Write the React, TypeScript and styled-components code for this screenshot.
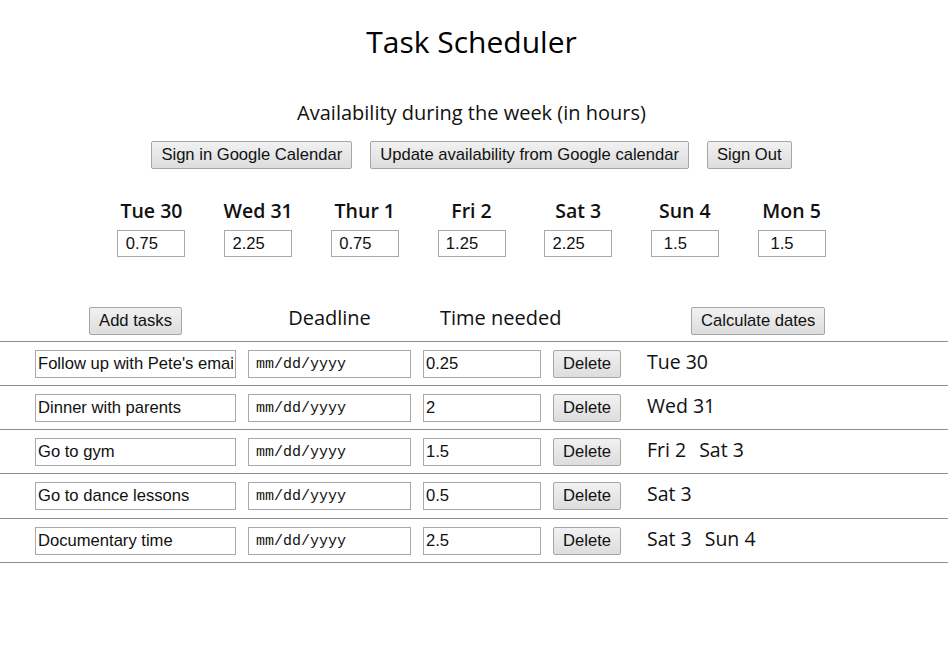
import React from "react";
import styled, { createGlobalStyle } from "styled-components";

const GlobalStyle = createGlobalStyle`
  html, body {
    margin: 0;
    padding: 0;
    background: #ffffff;
  }
  body {
    font-family: "Open Sans", "Noto Sans", sans-serif;
    color: #111111;
  }
`;

const Page = styled.div`
  width: 948px;
  padding-top: 22px;
`;

const Centered = styled.div`
  width: 943px;
`;

const Title = styled.h1`
  margin: 0;
  text-align: center;
  font-size: 30px;
  line-height: 40px;
  font-weight: 500;
  color: #000000;
`;

const Subtitle = styled.h3`
  margin: 38px 0 0;
  text-align: center;
  font-size: 20px;
  line-height: 26px;
  font-weight: 400;
`;

const ButtonRow = styled.div`
  display: flex;
  justify-content: center;
  gap: 18px;
  margin-top: 15px;
`;

const Button = styled.button`
  height: 28px;
  padding: 0 9px;
  font-family: "Liberation Sans", Arial, sans-serif;
  font-size: 16.6px;
  color: #111111;
  background: linear-gradient(#f1f1f1, #dddddd);
  border: 1px solid #a6a6a6;
  border-radius: 2px;
  cursor: pointer;
`;

const Week = styled.div`
  display: flex;
  justify-content: center;
  margin-top: 29px;
`;

const DayColumn = styled.div`
  width: 106.7px;
  display: flex;
  flex-direction: column;
  align-items: center;
  gap: 6px;
`;

const DayLabel = styled.div`
  font-size: 19.5px;
  line-height: 26px;
  font-weight: 600;
`;

const Field = styled.input`
  box-sizing: border-box;
  height: 28px;
  width: ${(p) => p.width ?? 201}px;
  padding: 1px 2px;
  font-family: "Liberation Sans", Arial, sans-serif;
  font-size: 16.6px;
  color: #111111;
  border: 1px solid #a9a9a9;
  border-radius: 0;
  background: #ffffff;
  outline: none;
`;

const HoursField = styled(Field)`
  height: 27px;
  text-align: center;
  padding: 1px 21px 1px 2px;
`;

const DateField = styled(Field)`
  font-family: "Liberation Mono", "DejaVu Sans Mono", monospace;
  font-size: 15px;
  padding-left: 7px;
`;

const Tasks = styled.div`
  margin-top: 50px;
`;

const Grid = styled.div`
  display: grid;
  grid-template-columns: 201px 163px 118px 68px 1fr;
  column-gap: 12px;
  align-items: center;
  padding-left: 35px;
`;

const HeaderRow = styled(Grid)`
  height: 34px;
  align-items: start;
`;

const HeaderLabel = styled.div<{ $offset?: number }>`
  font-size: 20px;
  line-height: 26px;
  margin-top: -2px;
  text-align: ${(p) => (p.$offset == null ? "center" : "left")};
  padding-left: ${(p) => p.$offset ?? 0}px;
  white-space: nowrap;
`;

const ButtonCell = styled.div<{ $inset?: number }>`
  display: flex;
  justify-content: ${(p) => (p.$inset == null ? "center" : "flex-start")};
  padding-left: ${(p) => p.$inset ?? 0}px;
`;

const TaskRow = styled(Grid)`
  border-top: 1px solid #8f8f8f;
  padding-top: 8px;
  padding-bottom: 7px;
  &:nth-child(5) {
    padding-bottom: 8px;
  }
  &:last-child {
    border-bottom: 1px solid #8f8f8f;
  }
`;

const Result = styled.div`
  display: flex;
  gap: 13px;
  padding-left: 14px;
  font-size: 19.5px;
  line-height: 26px;
  margin-top: -4px;
`;

const days = [
  { label: "Tue 30", hours: "0.75" },
  { label: "Wed 31", hours: "2.25" },
  { label: "Thur 1", hours: "0.75" },
  { label: "Fri 2", hours: "1.25" },
  { label: "Sat 3", hours: "2.25" },
  { label: "Sun 4", hours: "1.5" },
  { label: "Mon 5", hours: "1.5" },
];

const tasks = [
  { name: "Follow up with Pete's email", time: "0.25", dates: ["Tue 30"] },
  { name: "Dinner with parents", time: "2", dates: ["Wed 31"] },
  { name: "Go to gym", time: "1.5", dates: ["Fri 2", "Sat 3"] },
  { name: "Go to dance lessons", time: "0.5", dates: ["Sat 3"] },
  { name: "Documentary time", time: "2.5", dates: ["Sat 3", "Sun 4"] },
];

export default function App() {
  return (
    <Page>
      <GlobalStyle />
      <Centered>
        <Title>Task Scheduler</Title>
        <Subtitle>Availability during the week (in hours)</Subtitle>
        <ButtonRow>
          <Button>Sign in Google Calendar</Button>
          <Button>Update availability from Google calendar</Button>
          <Button>Sign Out</Button>
        </ButtonRow>

        <Week>
          {days.map((d) => (
            <DayColumn key={d.label}>
              <DayLabel>{d.label}</DayLabel>
              <HoursField width={68} defaultValue={d.hours} />
            </DayColumn>
          ))}
        </Week>
      </Centered>

      <Tasks>
        <HeaderRow>
          <ButtonCell>
            <Button>Add tasks</Button>
          </ButtonCell>
          <HeaderLabel>Deadline</HeaderLabel>
          <HeaderLabel $offset={17}>Time needed</HeaderLabel>
          <div />
          <ButtonCell $inset={58}>
            <Button>Calculate dates</Button>
          </ButtonCell>
        </HeaderRow>
        {tasks.map((t) => (
          <TaskRow key={t.name}>
            <Field width={201} defaultValue={t.name} />
            <DateField width={163} defaultValue="mm/dd/yyyy" />
            <Field width={118} defaultValue={t.time} />
            <Button>Delete</Button>
            <Result>
              {t.dates.map((d) => (
                <span key={d}>{d}</span>
              ))}
            </Result>
          </TaskRow>
        ))}
      </Tasks>
    </Page>
  );
}
